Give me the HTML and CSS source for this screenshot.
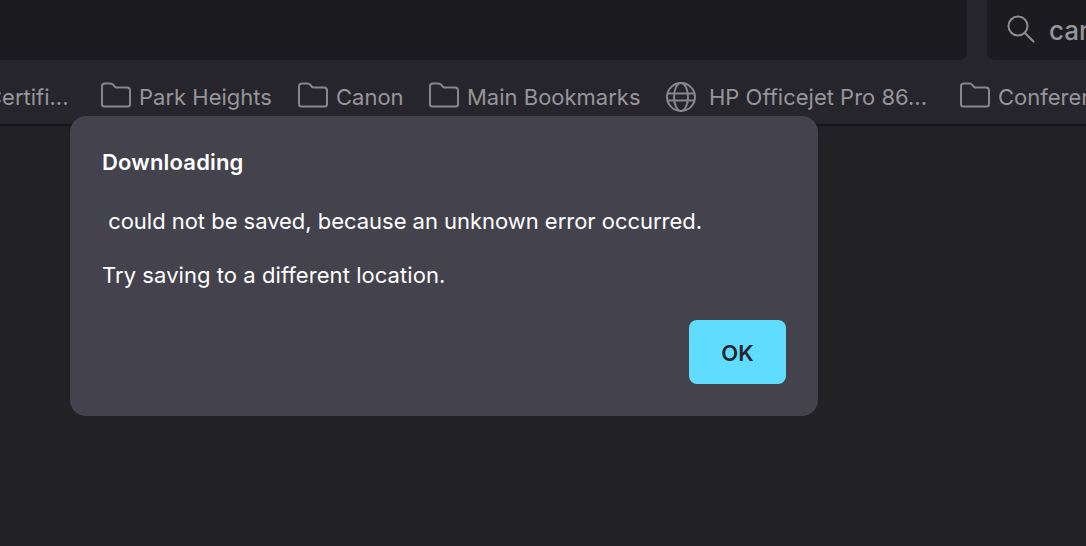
FILE: index.html
```html
<!DOCTYPE html>
<html lang="en">
<head>
<meta charset="utf-8">
<title>Downloading</title>
<link rel="stylesheet" href="styles.css">
</head>
<body>
<header class="toolbar">
  <div class="urlbar"></div>
  <div class="search">
    <svg class="search-icon" viewBox="0 0 30 30" width="30" height="30"><circle cx="12" cy="12" r="9.500" fill="none" stroke="currentColor" stroke-width="2"/><path d="M19 19L27.500 27.500" fill="none" stroke="currentColor" stroke-width="2.200" stroke-linecap="round"/></svg>
    <span class="search-text">canon</span>
  </div>
</header>
<nav class="bookmarks">
  <span class="bm bm-cut">Certifi...</span>
  <span class="bm bm-park"><svg class="ico" viewBox="0 0 30 26" width="30" height="26"><use href="#folder"/></svg>Park Heights</span>
  <span class="bm bm-canon"><svg class="ico" viewBox="0 0 30 26" width="30" height="26"><use href="#folder"/></svg>Canon</span>
  <span class="bm bm-main"><svg class="ico" viewBox="0 0 30 26" width="30" height="26"><use href="#folder"/></svg>Main Bookmarks</span>
  <span class="bm bm-hp"><svg class="globe" viewBox="0 0 30 30" width="30" height="30"><circle cx="15" cy="15" r="14" fill="none" stroke="currentColor" stroke-width="2"/><ellipse cx="15" cy="15" rx="7" ry="14" fill="none" stroke="currentColor" stroke-width="2"/><path d="M2 11.500h26M2 18.500h26" fill="none" stroke="currentColor" stroke-width="2"/></svg>HP Officejet Pro 86...</span>
  <span class="bm bm-conf"><svg class="ico" viewBox="0 0 30 26" width="30" height="26"><use href="#folder"/></svg>Conference</span>
</nav>
<main class="content"></main>
<section class="dialog">
  <h1 class="title">Downloading</h1>
  <p class="msg msg-first">&nbsp;could not be saved, because an unknown error occurred.</p>
  <p class="msg msg-second">Try saving to a different location.</p>
  <div class="actions"><button class="ok">OK</button></div>
</section>
<svg class="defs" width="0" height="0"><defs><path id="folder" d="M1 4.500C1 2.500 2 1.500 4 1.500h5.500c1.200 0 1.900.4 2.600 1.200l1.600 2c.5.6 1 .8 1.800.8H26c1.900 0 3 1 3 3V22c0 1.700-1 2.500-2.500 2.500h-23C2 24.500 1 23.700 1 22Z" fill="none" stroke="currentColor" stroke-width="2"/></defs></svg>
</body>
</html>
```
FILE: styles.css
```css
* { box-sizing: border-box; }
html, body { margin: 0; height: 100%; }
body {
  position: relative;
  width: 1086px;
  height: 546px;
  overflow: hidden;
  background: #222126;
  font-family: Inter, "Liberation Sans", sans-serif;
  display: flex;
  flex-direction: column;
}
.toolbar {
  height: 60px;
  flex: none;
  background: #26252b;
  display: flex;
  gap: 20px;
}
.urlbar {
  width: 967px;
  flex: none;
  background: #1c1b20;
  border-radius: 0 0 8px 0;
}
.search {
  flex: 1;
  background: #1c1b20;
  border-radius: 0 0 0 8px;
  display: flex;
  align-items: center;
  padding: 0 0 0 19px;
  color: #8e8d92;
  overflow: hidden;
  white-space: nowrap;
}
.search-icon { flex: none; margin-top: -2px; }
.search-text { font-size: 26px; font-weight: 500; margin-left: 13px; margin-top: 1px; color: #96959a; }
.bookmarks {
  height: 66px;
  flex: none;
  background: #26252b;
  border-bottom: 2px solid #16151a;
  display: flex;
  align-items: center;
  color: #96959a;
  font-size: 22px;
  white-space: nowrap;
  overflow: hidden;
  padding-top: 9px;
}
.bm { display: inline-flex; align-items: center; flex: none; }
.ico { margin-right: 8px; margin-top: -4px; flex: none; color: #87868b; }
.globe { margin-right: 13px; flex: none; color: #87868b; }
.bm-cut { margin-left: -14px; width: 115px; }
.bm-park { width: 197px; }
.bm-canon { width: 131px; }
.bm-main { width: 237px; }
.bm-hp { width: 294px; }
.content { flex: 1; }
.dialog {
  position: absolute;
  left: 70px;
  top: 116px;
  width: 748px;
  height: 300px;
  background: #44434d;
  border-radius: 16px;
  padding: 32px;
  color: #fff;
  font-size: 22px;
  display: flex;
  flex-direction: column;
}
.title { margin: 0; font-size: 22px; font-weight: 600; line-height: 28px; letter-spacing: 0.18px; }
.msg { margin: 31px 0 0; line-height: 28px; }
.msg-first { letter-spacing: -0.03px; }
.msg-second { margin-top: 26px; letter-spacing: 0.06px; }
.actions { margin-top: auto; display: flex; justify-content: flex-end; }
.ok {
  width: 97px;
  height: 64px;
  border: 0;
  border-radius: 8px;
  background: #60dcff;
  color: #25242a;
  padding: 2px 0 0;
  font: 600 22px Inter, "Liberation Sans", sans-serif;
}
.defs { position: absolute; }
```
